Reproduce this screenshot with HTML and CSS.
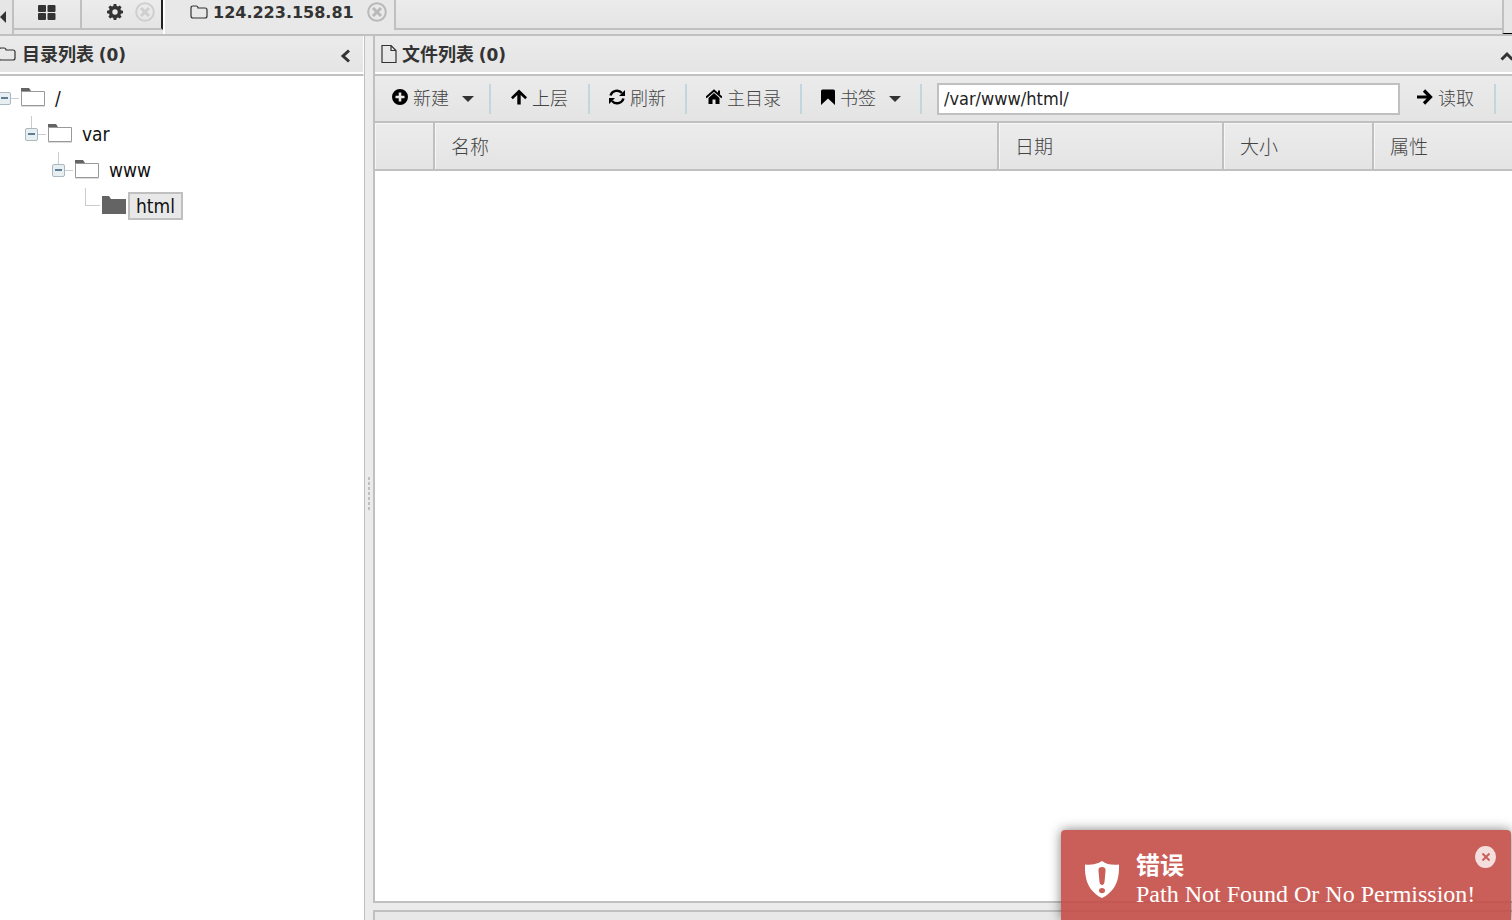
FILE: index.html
```html
<!DOCTYPE html>
<html lang="zh-CN">
<head>
<meta charset="utf-8">
<title>124.223.158.81</title>
<link rel="stylesheet" href="styles.css">
</head>
<body>
<div class="app">
  <nav class="tabs">
    <button class="tab-scroll" aria-label="向左滚动"><svg width="6" height="12" viewBox="0 0 6 12"><path d="M6 0v12L0 6z"/></svg></button>
    <div class="tab tab-home"><button aria-label="主页"><svg width="18" height="15" viewBox="0 0 18 15"><rect width="8" height="7" rx="1"/><rect x="9.500" width="8" height="7" rx="1"/><rect y="8" width="8" height="7" rx="1"/><rect x="9.500" y="8" width="8" height="7" rx="1"/></svg></button></div>
    <div class="tab tab-settings">
      <button aria-label="设置"><svg width="16" height="16" viewBox="0 0 16 16"><path fill-rule="evenodd" d="M6.700 0h2.600l.4 2.100 1.300.5 1.800-1.200 1.800 1.800-1.200 1.800.5 1.300 2.100.4v2.600l-2.100.4-.5 1.300 1.200 1.800-1.800 1.800-1.800-1.200-1.300.5-.4 2.100H6.700l-.4-2.100-1.300-.5-1.800 1.200-1.800-1.800L2.600 11l-.5-1.300L0 9.300V6.700l2.100-.4L2.600 5 1.400 3.200l1.800-1.800L5 2.600l1.300-.5zM8 5.300a2.700 2.700 0 1 0 0 5.400 2.700 2.700 0 0 0 0-5.400z"/></svg></button>
      <button class="close faint" aria-label="关闭"><svg width="20" height="20" viewBox="0 0 20 20"><circle cx="10" cy="10" r="8.800"/><path d="M6 6l8 8M14 6l-8 8"/></svg></button>
    </div>
    <div class="tab tab-active">
      <button><svg class="line" width="18" height="14" viewBox="0 0 18 14"><path d="M1 11V3q0-2 2-2h3q2 0 2 2h7q2 0 2 2v6q0 2-2 2H3q-2 0-2-2z"/></svg><span>124.223.158.81</span></button>
      <button class="close" aria-label="关闭"><svg width="20" height="20" viewBox="0 0 20 20"><circle cx="10" cy="10" r="8.800"/><path d="M6 6l8 8M14 6l-8 8"/></svg></button>
    </div>
    <div class="tab-rest"></div>
    <button class="tab-more" aria-label="更多"></button>
  </nav>
  <main class="panes">
    <section class="pane tree-pane">
      <header class="pane-head">
        <svg class="line" width="17" height="14" viewBox="2 0 17 14"><path d="M1 11V3q0-2 2-2h3q2 0 2 2h7q2 0 2 2v6q0 2-2 2H3q-2 0-2-2z"/></svg>
        <h2>目录列表 <span class="count">(0)</span></h2>
        <button class="collapse" aria-label="折叠"><svg width="11" height="14" viewBox="0 0 11 14"><path d="M9 1.500L3 7l6 5.500"/></svg></button>
      </header>
      <ul class="tree">
        <li><div class="node"><button class="toggle" aria-label="收起"></button><svg class="folder" width="26" height="22" viewBox="0 0 26 22"><path class="tab-shape" d="M1 7V1h8l2 3v3z"/><path class="sheet" d="M1.500 4.500H24.500V18.500H1.500z"/><path class="shade" d="M1 19.500h24"/></svg><span class="label">/</span></div>
          <ul>
            <li><div class="node"><button class="toggle" aria-label="收起"></button><svg class="folder" width="26" height="22" viewBox="0 0 26 22"><path class="tab-shape" d="M1 7V1h8l2 3v3z"/><path class="sheet" d="M1.500 4.500H24.500V18.500H1.500z"/><path class="shade" d="M1 19.500h24"/></svg><span class="label">var</span></div>
              <ul>
                <li><div class="node"><button class="toggle" aria-label="收起"></button><svg class="folder" width="26" height="22" viewBox="0 0 26 22"><path class="tab-shape" d="M1 7V1h8l2 3v3z"/><path class="sheet" d="M1.500 4.500H24.500V18.500H1.500z"/><path class="shade" d="M1 19.500h24"/></svg><span class="label">www</span></div>
                  <ul>
                    <li><div class="node leaf"><span class="elbow"></span><svg class="folder" width="26" height="22" viewBox="0 0 26 22"><path class="solid" d="M1 19V1h7l2 3h15v15z"/></svg><span class="label selected">html</span></div></li>
                  </ul>
                </li>
              </ul>
            </li>
          </ul>
        </li>
      </ul>
    </section>
    <div class="splitter"><span class="grip"></span></div>
    <div class="right">
      <section class="pane file-pane">
        <header class="pane-head">
          <svg class="line" width="16" height="18" viewBox="0 0 16 18"><path d="M1 .5h9l5 5v12H1zM10 .5v5h5"/></svg>
          <h2>文件列表 <span class="count">(0)</span></h2>
          <button class="collapse" aria-label="折叠"><svg width="12" height="10" viewBox="0 0 12 10"><path d="M1.500 8.500L7 3l5.500 5.500"/></svg></button>
        </header>
        <div class="toolbar">
          <button><svg width="16" height="16" viewBox="0 0 16 16"><path fill-rule="evenodd" d="M8 0a8 8 0 1 0 0 16A8 8 0 0 0 8 0zM6.700 3.500h2.600v3.200h3.200v2.600H9.300v3.200H6.700V9.300H3.500V6.700h3.200z"/></svg>新建<span class="caret"></span></button>
          <button><svg width="16" height="16" viewBox="0 0 16 16"><path d="M8 .5L16 8.300l-1.800 1.900L9.700 6V15.500H6.300V6L1.800 10.200 0 8.300z"/></svg>上层</button>
          <button><svg width="16" height="16" viewBox="0 0 16 16"><path class="stroke" d="M1.500 6.500C3 1.500 9.500 0 13 4M14.500 9.500C13 14.500 6.500 16 3 12"/><path d="M16 1v6h-6zM0 15V9h6z"/></svg>刷新</button>
          <button><svg width="16" height="16" viewBox="1 0 16 16"><path d="M9 4l5.500 5v6h-4v-4.500h-3V15h-4V9z"/><path class="roof" d="M1 8.500l8-7 8 7M14 1.500V5"/></svg>主目录</button>
          <button><svg width="14" height="16" viewBox="0 0 14 16"><path d="M0 2q0-1.500 1.500-1.500h11q1.500 0 1.500 1.500v14l-7-6.500L0 16z"/></svg>书签<span class="caret"></span></button>
          <input class="path" type="text" value="/var/www/html/" aria-label="路径">
          <button class="go"><svg width="16" height="16" viewBox="0 0 16 16"><path class="arrow" d="M0 8h13M7 1.500L13.500 8 7 14.500"/></svg>读取</button>
        </div>
        <table class="files">
          <colgroup><col class="c-icon"><col class="c-name"><col class="c-date"><col class="c-size"><col class="c-attr"></colgroup>
          <thead><tr><th></th><th>名称</th><th>日期</th><th>大小</th><th>属性</th></tr></thead>
        </table>
      </section>
      <section class="pane task-pane"></section>
    </div>
  </main>
</div>
<div class="toast" role="alert">
  <svg class="shield" width="36" height="38" viewBox="0 0 36 38"><path fill-rule="evenodd" d="M18 0q7 5 17 3.500C35.500 18 32 30 18 37 4 30 .5 18 1 3.500 11 5 18 0 18 0zM18 6q-4 0-3.500 4l1 11q.5 3 2.500 3t2.500-3l1-11Q22 6 18 6zM18 27a3 2.600 0 1 0 0 5.200A3 2.600 0 0 0 18 27z"/></svg>
  <div class="message"><strong>错误</strong><p>Path Not Found Or No Permission!</p></div>
  <button class="dismiss" aria-label="关闭"><svg width="8" height="8" viewBox="0 0 8 8"><path d="M.5.5l7 7M7.500.5l-7 7"/></svg></button>
</div>
</body>
</html>
```
FILE: styles.css
```css
* { box-sizing: border-box; }
body {
  margin: 0;
  overflow: hidden;
  background: #ebebeb;
  color: #333;
  font-family: "Noto Sans", "Noto Sans CJK SC", sans-serif;
  font-size: 18px;
}
button {
  display: flex;
  align-items: center;
  margin: 0;
  padding: 0;
  border: 0;
  background: none;
  color: inherit;
  font: inherit;
}
svg { display: block; flex: none; fill: #333; }
.line { fill: none; stroke: #333; stroke-width: 1.200; }
ul { margin: 0; padding: 0; list-style: none; }
.app { display: flex; flex-direction: column; height: 100vh; }

.tabs {
  display: flex;
  flex: none;
  height: 36px;
  border-bottom: 2px solid #c0c0c0;
  background: #e6e6e6;
}
.tab-scroll { width: 14px; border-right: 2px solid #c0c0c0; }
.tab {
  display: flex;
  align-items: center;
  height: 30px;
  padding-bottom: 4px;
  border-bottom: 2px solid #c0c0c0;
  background: linear-gradient(#ececec, #e4e4e4);
}
.tab-home { width: 68px; padding-left: 24px; border-right: 2px solid #c0c0c0; }
.tab-settings { width: 81px; gap: 12px; padding-left: 25px; border-right: 2px solid #222; }
.tab-active {
  gap: 13px;
  height: 34px;
  padding: 0 7px 10px 25px;
  border: 0;
  border-left: 2px solid #fff;
  background: #e8e8e8;
  font-family: "DejaVu Sans", sans-serif;
  font-size: 16px;
  font-weight: bold;
}
.tab-active button { gap: 5px; }
.close svg { fill: none; stroke: #b9b9b9; stroke-width: 2; }
.close path { stroke-width: 3; }
.faint svg { stroke: #cfcfcf; }
.tab-rest {
  flex: 1;
  height: 30px;
  border: 2px solid #c0c0c0;
  border-width: 0 0 2px 2px;
  background: linear-gradient(#ececec, #e4e4e4);
}
.tab-more { width: 10px; border-left: 2px solid #c0c0c0; border-bottom: 1px solid #000; }

.panes { display: flex; flex: 1; min-height: 0; }
.pane { background: #fff; }
.tree-pane { flex: none; width: 365px; border-right: 1px solid #c0c0c0; }
.pane-head {
  display: flex;
  align-items: center;
  height: 40px;
  padding-bottom: 2px;
  border-bottom: 2px solid #c0c0c0;
  box-shadow: inset 0 -2px #fff;
  background: linear-gradient(#ebebeb, #e4e4e4);
}
.tree-pane .pane-head { padding-right: 12px; border-right: 1px solid #fff; }
.pane-head h2 {
  margin: 0 0 0 5px;
  font: bold 18px/24px "Noto Sans", "Noto Sans CJK SC", sans-serif;
}
.pane-head .count { font-family: "DejaVu Sans", sans-serif; font-size: 17px; }
.collapse { margin-left: auto; padding-top: 3px; }
.collapse path { fill: none; stroke: #333; stroke-width: 3; }

.tree { padding-top: 4px; color: #111; font-family: "DejaVu Sans Condensed", sans-serif; font-size: 19px; }
.tree ul { padding-left: 27px; }
.node { display: flex; align-items: center; height: 36px; position: relative; }
.toggle {
  flex: none;
  width: 13px;
  height: 13px;
  margin-left: -2px;
  border: 1px solid #aab8c2;
  border-radius: 2px;
  background: linear-gradient(#5f7f90, #5f7f90) center / 7px 2px no-repeat, #e8eff2;
}
.toggle::after {
  content: "";
  position: absolute;
  left: 11px;
  width: 8px;
  height: 1px;
  background: #ccc;
}
.tree ul .toggle::before {
  content: "";
  position: absolute;
  top: 0;
  left: 4px;
  width: 1px;
  height: 12px;
  background: #ccc;
}
.folder { margin-left: 9px; }
.tab-shape, .solid { fill: #646464; }
.sheet { fill: #fff; stroke: #999; }
.shade { stroke: #ddd; }
.elbow {
  align-self: flex-start;
  width: 15px;
  height: 18px;
  margin-left: 4px;
  border: 1px solid #ccc;
  border-width: 0 0 1px 1px;
}
.leaf .folder { margin-left: 1px; }
.label { height: 28px; margin-left: 1px; padding: 0 6px; border: 2px solid transparent; line-height: 24px; }
.selected { border-color: #c0c0c0; background: #e8e8e8; }

.splitter { display: flex; flex: none; align-items: center; justify-content: center; width: 8px; padding-top: 32px; }
.grip {
  width: 2px;
  height: 35px;
  background: repeating-linear-gradient(#c0c0c0 0 3px, transparent 3px 5px);
}
.right { display: flex; flex: 1; flex-direction: column; gap: 7px; min-width: 0; }
.file-pane { flex: 1; border-left: 2px solid #c0c0c0; border-bottom: 2px solid #c0c0c0; }
.task-pane { flex: none; height: 10px; border: 2px solid #c0c0c0; border-width: 2px 0 0 2px; background: #e8e8e8; }
.file-pane .pane-head { padding-left: 6px; }

.toolbar {
  display: flex;
  align-items: center;
  height: 47px;
  padding-right: 16px;
  border-bottom: 2px solid #c0c0c0;
  background: linear-gradient(#ebebeb, #e4e4e4);
}
.toolbar button {
  flex: none;
  gap: 5px;
  height: 30px;
  padding: 0 20px 3px;
  border-right: 2px solid #c3d5dd;
  color: #444;
  font-weight: 300;
}
.toolbar button:first-child { padding-left: 17px; }
.toolbar button:has(.caret) { padding-right: 15px; }
.toolbar button:nth-child(n+3):nth-child(-n+5) { padding-right: 19px; padding-left: 19px; }
.toolbar button:nth-child(5) { padding-right: 15px; }
.toolbar svg { fill: #000; }
.stroke { fill: none; stroke: #000; stroke-width: 2.400; }
.roof { fill: none; stroke: #000; stroke-width: 2; }
.arrow { fill: none; stroke: #000; stroke-width: 3.200; }
.caret { margin: 3px 0 0 8px; border: 6px solid transparent; border-top-color: #333; border-bottom: 0; }
.path {
  flex: 1;
  min-width: 0;
  height: 32px;
  margin-left: 15px;
  padding: 0 5px;
  border: 2px solid #c0c0c0;
  background: #fff;
  color: #222;
  font: 18px "DejaVu Sans Condensed", sans-serif;
}
.toolbar .go { padding-left: 17px; }

.files { width: 100%; border-collapse: separate; border-spacing: 0; table-layout: fixed; }
.files th {
  height: 48px;
  padding: 0 16px;
  border-right: 2px solid #c0c0c0;
  border-bottom: 2px solid #c0c0c0;
  box-shadow: inset 1px 1px #f6f6f6;
  background: linear-gradient(#ececec, #e4e4e4);
  color: #444;
  font-size: 19px;
  font-weight: 300;
  text-align: left;
}
.files th:last-child { border-right: 0; }
.c-icon { width: 60px; }
.c-date { width: 225px; }
.c-size { width: 150px; }
.c-attr { width: 138px; }

.toast {
  position: absolute;
  right: 1px;
  bottom: 0;
  display: flex;
  align-items: flex-start;
  width: 450px;
  height: 90px;
  padding: 16px 15px 0 23px;
  border-radius: 4px 4px 0 0;
  background: rgba(196, 78, 71, .9);
  box-shadow: 0 0 12px rgba(0, 0, 0, .5);
  color: #fff;
  font: 24px/28px "Liberation Serif", "Noto Sans CJK SC", serif;
}
.shield { margin-top: 15px; fill: #fff; }
.message { flex: 1; margin: 6px 0 0 16px; white-space: nowrap; }
.message strong { display: block; }
.message p { margin: 0; }
.dismiss { justify-content: center; width: 22px; height: 22px; border-radius: 50%; background: rgba(255, 255, 255, .8); }
.dismiss path { stroke: #c9605a; stroke-width: 2; }
```
